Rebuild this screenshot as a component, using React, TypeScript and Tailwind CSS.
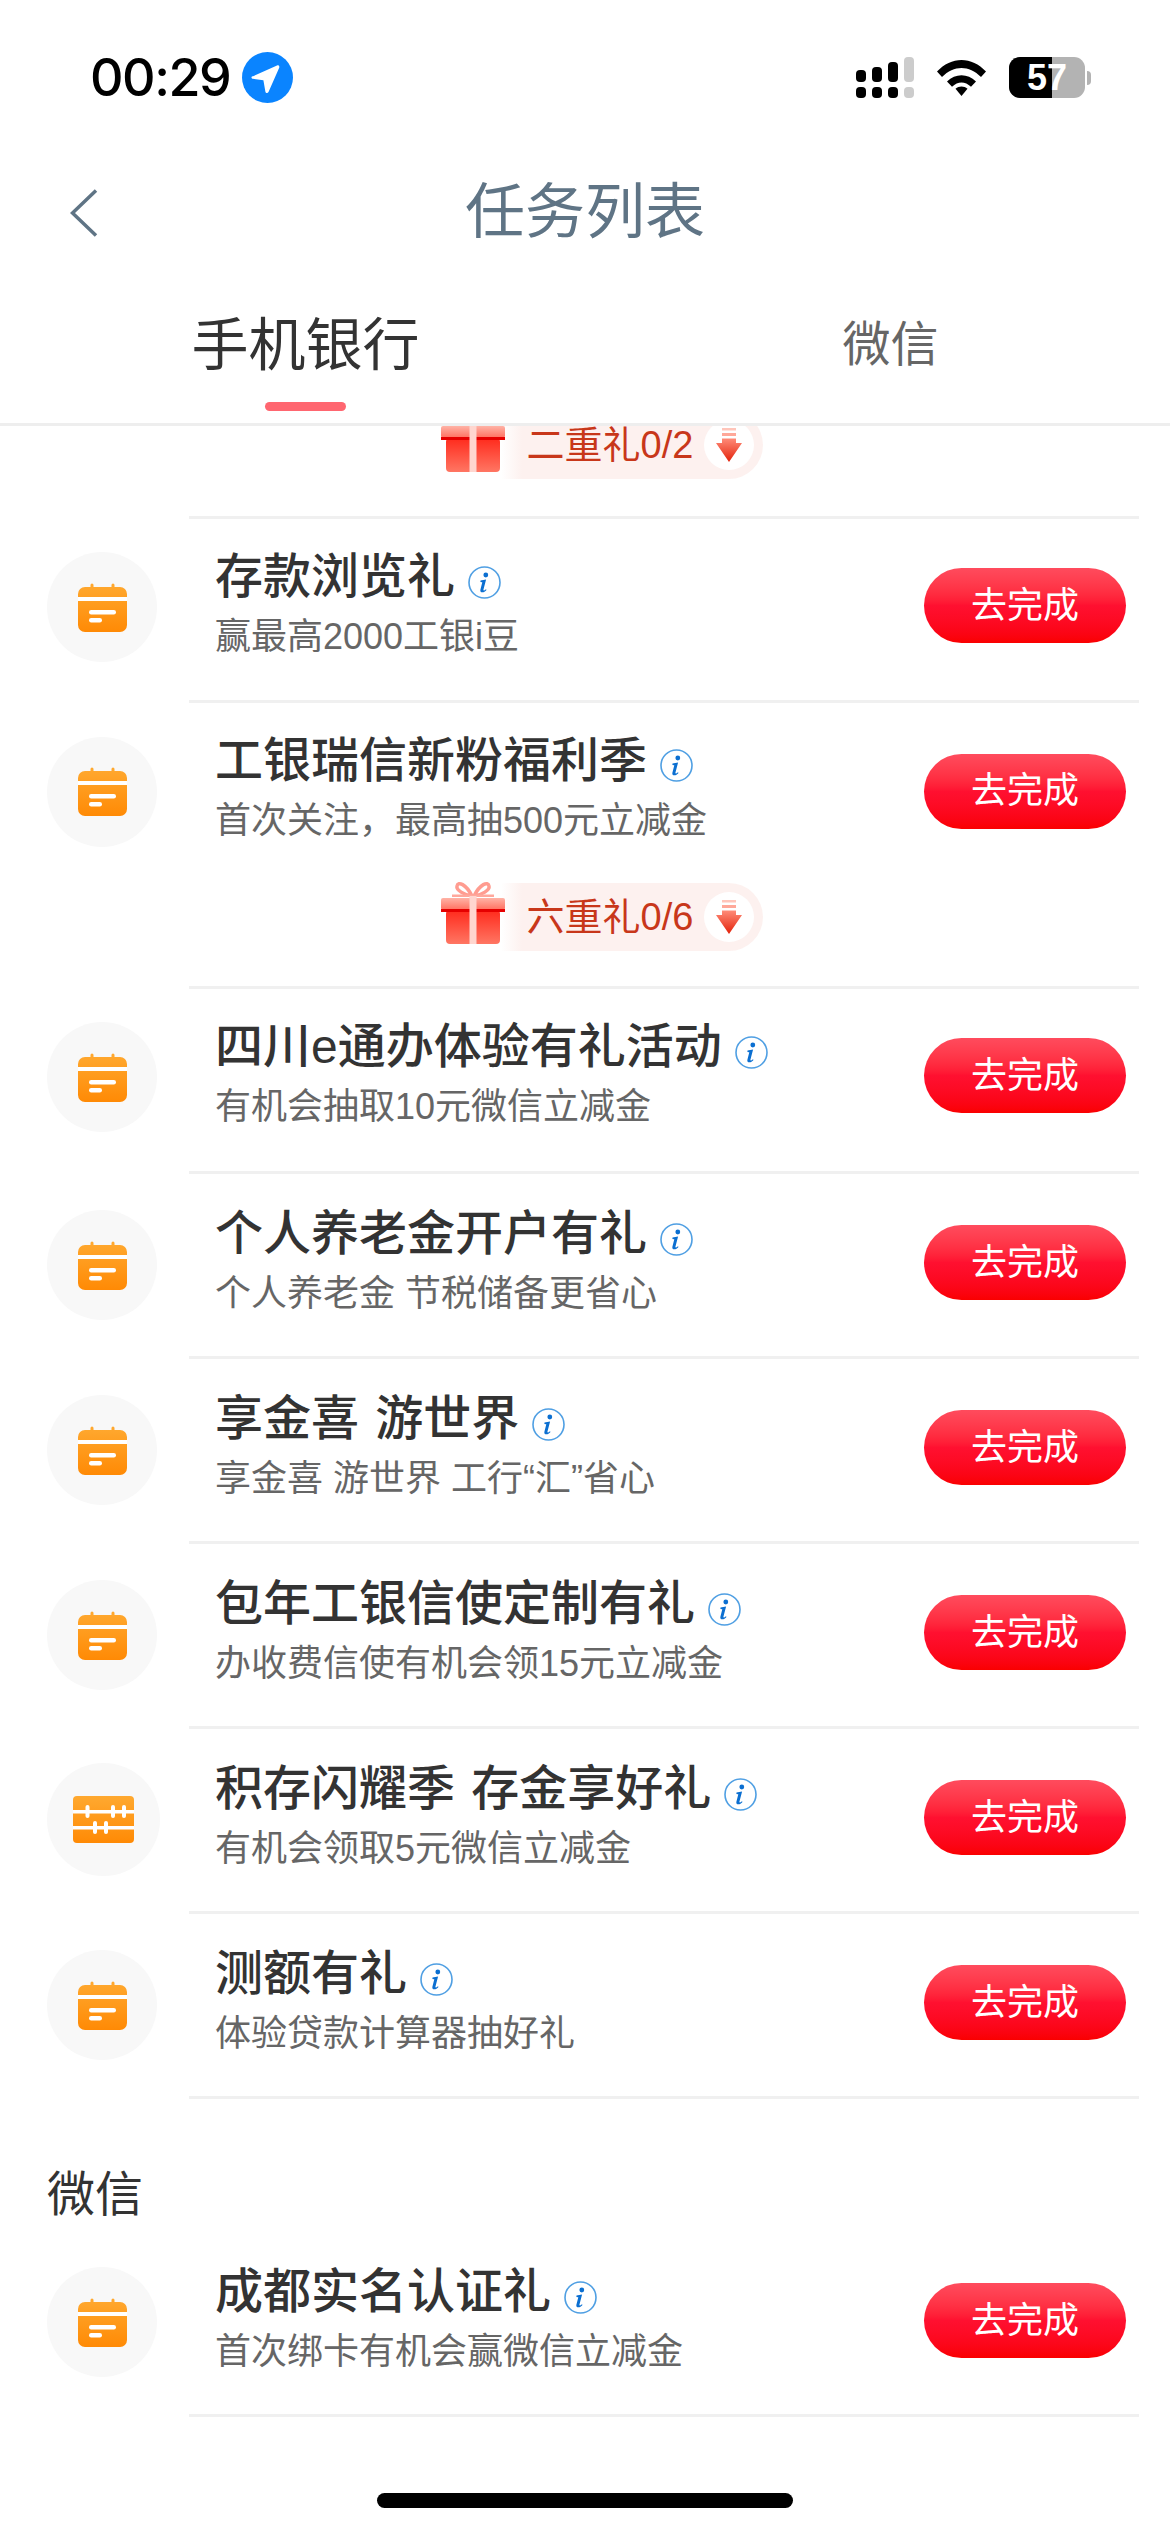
type Task = {
  title: string
  desc: string
  icon?: 'calendar' | 'abacus'
  // the rows in the reference don't sit at quite the same offset from their divider
  circleMt?: string
  textMt?: string
  btnMt?: string
}

const FIRST_TASKS: Task[] = [
  {
    title: '存款浏览礼',
    desc: '赢最高2000工银i豆',
    circleMt: 'mt-[36px]',
    textMt: 'mt-[32px]',
    btnMt: 'mt-[49px]',
  },
  {
    title: '工银瑞信新粉福利季',
    desc: '首次关注，最高抽500元立减金',
    circleMt: 'mt-[37px]',
    textMt: 'mt-[32px]',
  },
]

const SECOND_TASKS: Task[] = [
  {
    title: '四川e通办体验有礼活动',
    desc: '有机会抽取10元微信立减金',
    circleMt: 'mt-[36px]',
    textMt: 'mt-[32px]',
    btnMt: 'mt-[49px]',
  },
  { title: '个人养老金开户有礼', desc: '个人养老金 节税储备更省心' },
  { title: '享金喜 游世界', desc: '享金喜 游世界 工行“汇”省心' },
  { title: '包年工银信使定制有礼', desc: '办收费信使有机会领15元立减金' },
  {
    title: '积存闪耀季 存金享好礼',
    desc: '有机会领取5元微信立减金',
    icon: 'abacus',
    circleMt: 'mt-[37px]',
  },
  { title: '测额有礼', desc: '体验贷款计算器抽好礼' },
]

const WECHAT_TASK: Task = {
  title: '成都实名认证礼',
  desc: '首次绑卡有机会赢微信立减金',
  circleMt: 'mt-[37px]',
  textMt: 'mt-[33px]',
  btnMt: 'mt-[50px]',
}

function CalendarIcon() {
  return (
    <svg width="49" height="49" viewBox="0 0 49 49">
      <defs>
        <linearGradient id="cal" x1="0" y1="0" x2="0" y2="1">
          <stop offset="0" stopColor="#ffa930" />
          <stop offset="1" stopColor="#ff8a05" />
        </linearGradient>
      </defs>
      <path
        d="M7 4h5.500V2a1.500 1.500 0 0 1 3 0v2h18V2a1.500 1.500 0 0 1 3 0v2H42a7 7 0 0 1 7 7v31a7 7 0 0 1-7 7H7a7 7 0 0 1-7-7V11a7 7 0 0 1 7-7z"
        fill="url(#cal)"
      />
      <rect x="0" y="14" width="49" height="4" fill="#fff" />
      <rect x="11" y="27" width="27" height="4.500" rx="2.200" fill="#fff" />
      <rect x="11" y="35" width="13" height="4.500" rx="2.200" fill="#fff" />
    </svg>
  )
}

function AbacusIcon() {
  return (
    <svg width="61" height="47" viewBox="0 0 61 47">
      <defs>
        <linearGradient id="aba" x1="0" y1="0" x2="0" y2="1">
          <stop offset="0" stopColor="#ffa930" />
          <stop offset="1" stopColor="#ff8a05" />
        </linearGradient>
      </defs>
      <rect width="61" height="47" rx="4" fill="url(#aba)" />
      <rect y="14" width="61" height="3.500" fill="#fff" />
      <rect y="30" width="61" height="3.500" fill="#fff" />
      <rect x="12.500" y="9" width="4" height="13" rx="2" fill="#fff" />
      <rect x="38" y="9" width="4" height="13" rx="2" fill="#fff" />
      <rect x="49" y="9" width="4" height="13" rx="2" fill="#fff" />
      <rect x="20" y="25" width="4" height="13" rx="2" fill="#fff" />
      <rect x="31" y="25" width="4" height="13" rx="2" fill="#fff" />
    </svg>
  )
}

function InfoIcon() {
  return (
    <svg width="33" height="33" viewBox="0 0 33 33" className="mt-[10px] shrink-0">
      <circle cx="16.500" cy="16.500" r="15.500" fill="none" stroke="#4f9fe3" strokeWidth="1.600" />
      <circle cx="17.800" cy="9" r="2.400" fill="#0b6fd1" />
      <path
        d="M12.500 14.600l5.600-1-2.700 10.200c-.2.800.6 1 1.200.5l1.400-1.100.5.700c-1.400 1.600-2.600 2.400-4.100 2.400-1.600 0-2.400-1-2-2.600l1.900-7.500-1.900-.1z"
        fill="#0b6fd1"
      />
    </svg>
  )
}

function GiftIcon() {
  return (
    <svg width="64" height="64" viewBox="0 0 64 64" className="relative mb-[8px] shrink-0">
      <defs>
        <linearGradient id="giftBody" x1="0" y1="0" x2="0" y2="1">
          <stop offset="0" stopColor="#ff2a1c" />
          <stop offset="1" stopColor="#ff7663" />
        </linearGradient>
        <linearGradient id="giftLid" x1="0" y1="0" x2="0" y2="1">
          <stop offset="0" stopColor="#ffb3a6" />
          <stop offset="1" stopColor="#ff6f5f" />
        </linearGradient>
      </defs>
      <path d="M31 15C25 3 17 0 16 5c-1 4 7 9 15 10z" fill="none" stroke="#ff9c90" strokeWidth="3.500" />
      <path d="M33 15C39 3 47 0 48 5c1 4-7 9-15 10z" fill="none" stroke="#ff9c90" strokeWidth="3.500" />
      <rect x="11" y="13.500" width="42" height="2.500" fill="#ffa89c" />
      <rect x="5" y="29" width="54" height="34" rx="4" fill="url(#giftBody)" />
      <rect x="0" y="17" width="64" height="12" rx="2" fill="url(#giftLid)" />
      <rect x="0" y="28" width="64" height="3" fill="#e60000" />
      <rect x="28.500" y="15" width="7" height="48" fill="#ffd6cf" />
    </svg>
  )
}

function DownArrow() {
  return (
    <svg width="26" height="34" viewBox="0 0 26 34">
      <defs>
        <linearGradient id="arrow" x1="0" y1="0" x2="0" y2="1">
          <stop offset="0" stopColor="#ff8b78" />
          <stop offset="1" stopColor="#e3220a" />
        </linearGradient>
      </defs>
      <rect x="6" y="0" width="14" height="2.500" fill="#ffc5ba" />
      <rect x="6" y="5" width="14" height="3" fill="#ffa899" />
      <path d="M6 10.500h14V15h6L13 34 0 15h6z" fill="url(#arrow)" />
    </svg>
  )
}

function RewardPill({ label, className }: { label: string; className?: string }) {
  return (
    <div className={`flex h-[68px] items-center justify-center pl-[33px] ${className ?? ''}`}>
      <GiftIcon />
      <div className="-ml-[4px] flex h-[68px] w-[262px] items-center rounded-r-[34px] bg-[linear-gradient(90deg,#ffffff,#fdf1ef_8%)] pl-[26px]">
        <span className="w-[177px] whitespace-nowrap text-[38px] leading-none text-[#c8371a]">{label}</span>
        <span className="flex h-[50px] w-[50px] items-center justify-center rounded-full bg-white">
          <DownArrow />
        </span>
      </div>
    </div>
  )
}

function TaskRow({ task, compact, noBorder }: { task: Task; compact?: boolean; noBorder?: boolean }) {
  const big = task.icon === 'abacus'
  return (
    <div className={`flex items-start ${compact ? 'h-[183.500px]' : 'h-[185px]'}`}>
      <div
        className={`ml-[47px] flex shrink-0 items-center justify-center rounded-full bg-[#f8f8f8] ${
          task.circleMt ?? 'mt-[39px]'
        } ${big ? 'h-[113px] w-[113px]' : 'h-[110px] w-[110px]'}`}
      >
        {big ? <AbacusIcon /> : <CalendarIcon />}
      </div>
      <div
        className={`flex h-full w-[950px] items-start border-t-[3px] ${big ? 'ml-[29px]' : 'ml-[32px]'} ${
          noBorder ? 'border-transparent' : 'border-[#f0f0f0]'
        }`}
      >
        <div className={`ml-[26px] w-[709px] ${task.textMt ?? 'mt-[34px]'}`}>
          <div className="flex items-center gap-[13px]">
            <span className="whitespace-nowrap text-[48px] font-medium leading-[52px] text-[#333] [word-spacing:3px]">
              {task.title}
            </span>
            <InfoIcon />
          </div>
          <div className="mt-[12px] whitespace-nowrap text-[36px] leading-[44px] text-[#666]">{task.desc}</div>
        </div>
        <button
          type="button"
          className={`h-[75px] w-[202px] shrink-0 rounded-full bg-gradient-to-b from-[#ff4b5d] via-[#ff1030] to-[#fa0000] text-[36px] text-white ${
            task.btnMt ?? 'mt-[51px]'
          }`}
        >
          去完成
        </button>
      </div>
    </div>
  )
}

function StatusBar() {
  return (
    <div className="flex h-[155px] items-start justify-between pl-[90px] pr-[79px] pt-[52px]">
      <div className="flex items-center gap-[12px]">
        <span className="font-['Inter',sans-serif] text-[52px] font-medium leading-[51px] tracking-[-1.500px] text-black">
          00:29
        </span>
        <svg width="51" height="51" viewBox="0 0 51 51">
          <circle cx="25.500" cy="25.500" r="25.500" fill="#0a84ff" />
          <path
            d="M10.500 24.500 35 13.500c1.500-.6 2.800.7 2.200 2.200L26.500 40c-.7 1.500-2.800 1.300-3.100-.3l-2-11.500-10.500-1.400c-1.700-.3-2-2-.4-2.800z"
            fill="#fff"
          />
        </svg>
      </div>
      <div className="mt-[5px] flex items-center">
        <svg width="58" height="41" viewBox="0 0 58 41">
          <rect x="0" y="13" width="10" height="12" rx="4" fill="#000" />
          <rect x="16" y="10" width="10" height="15" rx="4" fill="#000" />
          <rect x="32" y="5" width="10" height="20" rx="4" fill="#000" />
          <rect x="48" y="0" width="10" height="25" rx="4" fill="#ccc" />
          <rect x="0" y="30" width="10" height="11" rx="4" fill="#000" />
          <rect x="16" y="30" width="10" height="11" rx="4" fill="#000" />
          <rect x="32" y="30" width="10" height="11" rx="4" fill="#000" />
          <rect x="48" y="30" width="10" height="11" rx="4" fill="#ccc" />
        </svg>
        <svg width="49" height="37" viewBox="0 0 49 37" className="ml-[23px]">
          <path d="M0 12.500C14-3 35-3 49 12.500l-5 5.500C32 6 17 6 5 18z" fill="#000" />
          <path d="M10 22.500c8.500-8.500 20.500-8.500 29 0l-5 5.200c-6-5.700-13-5.700-19 0z" fill="#000" />
          <path d="M18.500 29.800c3.600-3 8.400-3 12 0L24.500 37z" fill="#000" />
        </svg>
        <div className="relative ml-[23px] flex h-[41px] w-[76px] overflow-hidden rounded-[11px] bg-[#b3b3b3]">
          <div className="h-full w-[43px] bg-black" />
          <span className="absolute inset-0 flex items-center justify-center text-[36px] font-bold leading-none text-white">
            57
          </span>
        </div>
        <div className="ml-[2px] h-[14px] w-[4px] rounded-r-full bg-[#b3b3b3]" />
      </div>
    </div>
  )
}

function Header() {
  return (
    <div className="h-[271px] border-b-[3px] border-[#eeeeee]">
      <div className="grid h-[110px] grid-cols-[1fr_auto_1fr] items-center pt-[6px]">
        <svg width="28" height="48" viewBox="0 0 28 48" className="ml-[70px]">
          <path d="M26 1.500 2.500 24 26 46.500" fill="none" stroke="#5f7485" strokeWidth="3.500" />
        </svg>
        <h1 className="text-[60px] font-normal leading-none text-[#5f7485]">任务列表</h1>
        <div />
      </div>
      <div className="grid grid-cols-[585px_585px] overflow-hidden pl-[13px] pt-[42px]">
        <div className="flex flex-col items-center">
          <span className="h-[76px] text-[57px] leading-[76px] text-[#333]">手机银行</span>
          <span className="mt-[19px] h-[9px] w-[81px] rounded-full bg-[#ff6670]" />
        </div>
        <div className="flex flex-col items-center">
          <span className="h-[76px] text-[48px] leading-[76px] text-[#666]">微信</span>
        </div>
      </div>
    </div>
  )
}

export default function App() {
  return (
    <div className="flex h-[2532px] w-[1170px] flex-col overflow-hidden bg-white font-['Liberation_Sans','Noto_Sans_CJK_SC',sans-serif]">
      <StatusBar />
      <Header />
      <div className="h-[2106px] overflow-hidden">
        <RewardPill label="二重礼0/2" className="-mt-[15px] mb-[37px]" />
        {FIRST_TASKS.map((task) => (
          <TaskRow key={task.title} task={task} compact />
        ))}
        <RewardPill label="六重礼0/6" className="mb-[35px]" />
        {SECOND_TASKS.map((task) => (
          <TaskRow key={task.title} task={task} />
        ))}
        <div className="ml-[189px] h-[3px] w-[950px] bg-[#f0f0f0]" />
        <div className="pb-[2px] pl-[47px] pt-[63px] text-[48px] leading-[66px] text-[#333]">微信</div>
        <TaskRow task={WECHAT_TASK} noBorder compact />
        <div className="ml-[189px] h-[3px] w-[950px] bg-[#f0f0f0]" />
        <div className="mx-auto mt-[76.500px] h-[15px] w-[416px] rounded-full bg-black" />
      </div>
    </div>
  )
}
